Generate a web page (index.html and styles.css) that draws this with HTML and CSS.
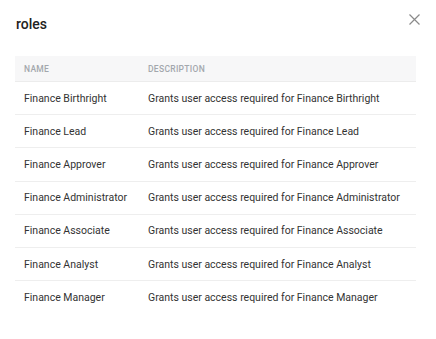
FILE: index.html
```html
<!DOCTYPE html>
<html lang="en">
<head>
    <meta charset="UTF-8">
    <title>roles</title>
    <link rel="stylesheet" href="styles.css">
</head>
<body>
    <div class="modal">
        <div class="modal-header">
            <h2>roles</h2>
            <button class="close" aria-label="Close">
                <svg width="11" height="11" viewBox="0 0 11 11"><path d="M0.5 0.5 L10.5 10.5 M10.5 0.5 L0.5 10.5" stroke="#8a8a8a" stroke-width="1.2" fill="none"/></svg>
            </button>
        </div>
        <table class="roles-table">
            <thead>
                <tr><th class="col-name">Name</th><th>Description</th></tr>
            </thead>
            <tbody>
                <tr><td>Finance Birthright</td><td>Grants user access required for Finance Birthright</td></tr>
                <tr><td>Finance Lead</td><td>Grants user access required for Finance Lead</td></tr>
                <tr><td>Finance Approver</td><td>Grants user access required for Finance Approver</td></tr>
                <tr><td>Finance Administrator</td><td>Grants user access required for Finance Administrator</td></tr>
                <tr><td>Finance Associate</td><td>Grants user access required for Finance Associate</td></tr>
                <tr><td>Finance Analyst</td><td>Grants user access required for Finance Analyst</td></tr>
                <tr><td>Finance Manager</td><td>Grants user access required for Finance Manager</td></tr>
            </tbody>
        </table>
    </div>
</body>
</html>
```

FILE: styles.css
```css
body {
    margin: 0;
    background: #fff;
    font-family: Roboto, "Liberation Sans", sans-serif;
    color: #333;
}
.modal {
    padding: 13px 20px 0 15px;
}
.modal-header {
    display: flex;
    justify-content: space-between;
    align-items: flex-start;
    height: 43px;
}
.modal-header h2 {
    margin: 0;
    padding: 3px 0 0 1px;
    font-size: 14px;
    font-weight: 500;
    color: #222;
    line-height: 16px;
}
.close {
    background: none;
    border: none;
    padding: 0;
    margin-right: -4px;
    cursor: pointer;
}
.roles-table {
    width: 401px;
    border-collapse: collapse;
    font-size: 10.5px;
}
.roles-table th {
    background: #f7f7f8;
    height: 25px;
    padding: 0 9px;
    text-align: left;
    font-size: 8.5px;
    font-weight: 500;
    letter-spacing: 0.3px;
    text-transform: uppercase;
    color: #a3a7ad;
    border-bottom: 1px solid #ececec;
}
.roles-table .col-name {
    width: 106px;
}
.roles-table td {
    height: 32.2px;
    padding: 0 9px;
    color: #333;
    border-bottom: 1px solid #eeeeee;
    white-space: nowrap;
}
.roles-table tr:last-child td {
    border-bottom: none;
}
```
